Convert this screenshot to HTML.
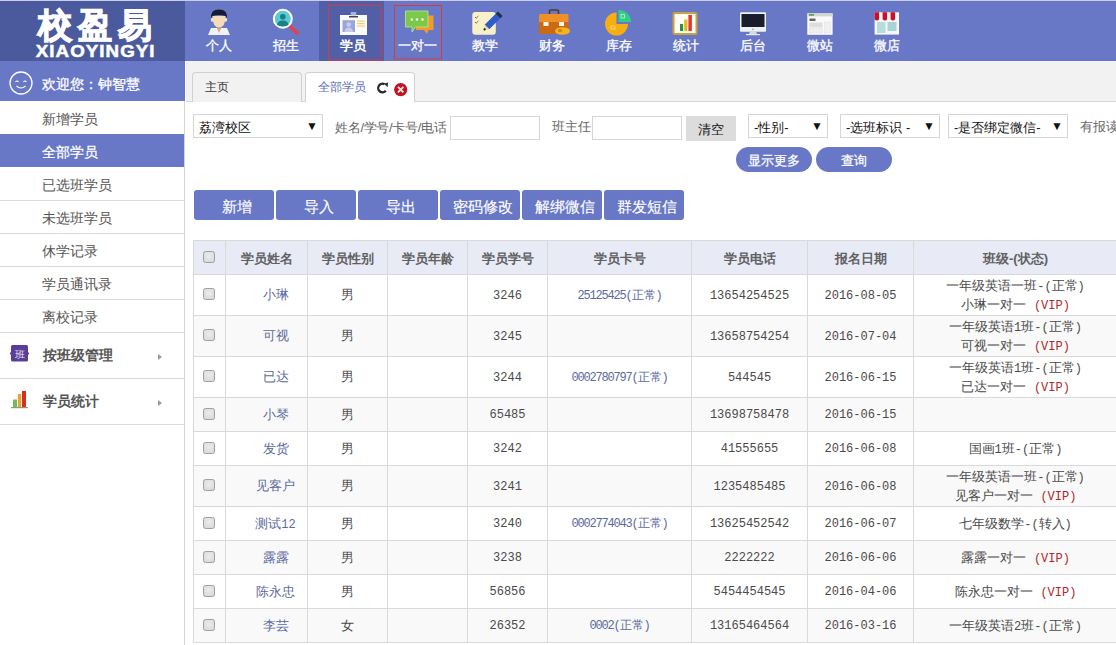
<!DOCTYPE html>
<html><head><meta charset="utf-8">
<style>
*{box-sizing:border-box;margin:0;padding:0}
html,body{width:1116px;height:645px;overflow:hidden;background:#fff;font-family:"Liberation Sans",sans-serif;position:relative}
.a{position:absolute}
#topline{left:0;top:0;width:1116px;height:1px;background:#c9cdef}
#logo{left:0;top:1px;width:185px;height:60px;background:#4b5a9c}
#nav{left:185px;top:1px;width:931px;height:60px;background:#6978c6}
#navact{left:319px;top:1px;width:65px;height:60px;background:#505fa6}
.ni{position:absolute;top:1px;width:66px;height:60px;text-align:center;color:#fff;font-size:13px}
.ni .t{position:absolute;left:0;width:66px;top:36px;line-height:17px}
.ni svg{position:absolute;left:17px;top:9px}
.rr{position:absolute;border:1px solid #d0343a}
#side{left:0;top:61px;width:185px;height:584px;background:#fff;border-right:1px solid #d4d4d4}
#welcome{left:0;top:61px;width:185px;height:40px;background:#6978c6;color:#fff;font-size:14px}
.si{position:absolute;left:0;width:184px;height:33px;font-size:14px;color:#555;line-height:33px;padding-left:42px;padding-top:2px}
.hl{position:absolute;left:0;width:184px;height:1px;background:#d9d9d9}
.si.sel{background:#6978c6;color:#fff;border-bottom:none;-webkit-text-stroke:0.25px #fff}
.sg{position:absolute;left:0;width:184px;height:46px;font-size:14px;color:#555;font-weight:bold;line-height:46px;padding-left:43px}
#tabbar{left:186px;top:61px;width:930px;height:41px;background:#f2f2f2;border-bottom:1px solid #d6d6d6}
.tab{position:absolute;top:72px;height:30px;border:1px solid #d0d0d0;border-bottom:none;border-radius:4px 4px 0 0;font-size:13px}
.sel2{position:absolute;height:24px;border:1px solid #d6d6d6;background:#fff;font-size:13px;color:#111;line-height:26px;padding-left:5px;white-space:nowrap}
.sel2 .ar{position:absolute;right:4px;top:-2px;font-size:12px}
.lbl{position:absolute;font-size:13px;color:#666;line-height:16px}
.inp{position:absolute;height:24px;border:1px solid #d6d6d6;background:#fff}
.btn{position:absolute;top:190px;width:80px;height:30px;background:#6978c6;border-radius:3px;color:#fff;font-size:14.5px;text-align:center;line-height:34px;padding-left:5px;-webkit-text-stroke:0.15px #fff}
.pill{position:absolute;top:147px;width:76px;height:25px;background:#6978c6;border-radius:13px;color:#fff;font-size:13px;text-align:center;line-height:27px;-webkit-text-stroke:0.25px #fff}
table{position:absolute;left:193px;top:240px;border-collapse:collapse;table-layout:fixed;width:924px}
td,th{border:1px solid #d9d9d9;text-align:center;vertical-align:middle;padding:0}
th{height:34px;background:#e8eaf6;font-size:13px;color:#606060;font-weight:bold;padding-top:2px}
td{font-size:13px;color:#4a4a4a;font-family:"Liberation Mono",monospace}
tr.e td{background:#f9f9f9}
.cb{display:inline-block;position:relative;top:-1px;left:-1px;width:12px;height:12px;border:1px solid #a0a0a0;border-radius:2.5px;background:radial-gradient(circle at 50% 40%,#ececec,#d6d6d6);vertical-align:middle}
.nm{color:#5b6aa0;padding-left:18px!important}
.cd{color:#5b6aa0;font-size:12px}
.vip{color:#b0262a}
.n{font-size:12px}
.nt{position:absolute;top:38px;width:80px;text-align:center;color:#fff;font-size:13px;line-height:16px;-webkit-text-stroke:0.3px #fff}
#logocn{left:0px;top:5px;width:190px;text-align:center;color:#fff;font-size:34px;font-weight:bold;letter-spacing:6px;line-height:40px;padding-left:6px;white-space:nowrap;-webkit-text-stroke:1.2px #fff}
#logoen{left:0px;top:42px;width:190px;text-align:center;color:#fff;font-size:16px;font-weight:bold;letter-spacing:0.9px;line-height:20px;padding-left:0.9px;white-space:nowrap;-webkit-text-stroke:0.5px #fff;transform:scaleX(1.17);transform-origin:94px 0}
.car{position:absolute;left:158px;top:22px;width:0;height:0;border-left:4px solid #999;border-top:3.5px solid transparent;border-bottom:3.5px solid transparent}
.cl{line-height:19px;padding-top:2px!important}
.cl span{line-height:0}
.cn{letter-spacing:-1.2px}
</style></head><body>
<div class="a" id="topline"></div>
<div class="a" id="logo"></div>
<div class="a" id="nav"></div>
<div class="a" id="navact"></div>
<div class="a" id="logocn">校盈易</div><div class="a" id="logoen">XIAOYINGYI</div>
<svg class="a" style="left:0;top:0" width="1116" height="61" viewBox="0 0 1116 61">
<!-- logo -->
<!-- person -->
<g>
<path d="M208 35 L211 28 L227 28 L230 35 Z" fill="#eef2f6"/>
<path d="M216.5 27.5 L219 33 L221.5 27.5 Z" fill="#d8aa84"/>
<ellipse cx="212.2" cy="19.8" rx="1.3" ry="2" fill="#f0e6f0"/>
<ellipse cx="225.8" cy="19.8" rx="1.3" ry="2" fill="#f0e6f0"/>
<path d="M212.5 16 Q212.5 27.5 219 27.5 Q225.5 27.5 225.5 16 Z" fill="#f5dcb8"/>
<path d="M211.3 18.5 Q210 9.5 219 9.5 Q228 9.5 226.7 18.5 L225.6 16 Q219 14 212.4 16 Z" fill="#161c30"/>
</g>
<!-- magnifier -->
<g>
<line x1="289.5" y1="26" x2="297" y2="33" stroke="#e8404a" stroke-width="3.5" stroke-linecap="round"/>
<circle cx="282.8" cy="18.8" r="9" fill="#5ccad0" stroke="#fff" stroke-width="2"/>
<circle cx="282.8" cy="16.8" r="2.8" fill="#178089"/>
<path d="M277 25 Q277.5 20.5 282.8 20.5 Q288 20.5 288.5 25 Q283 27.5 277 25Z" fill="#178089"/>
</g>
<!-- id card -->
<g>
<rect x="340" y="15" width="27" height="20" fill="#fbfbfd"/>
<rect x="350.8" y="12" width="5.4" height="3.5" fill="#aab4d6"/>
<rect x="349" y="16" width="9" height="1.5" fill="#444"/>
<rect x="342.5" y="20.2" width="12.5" height="11.8" fill="#9aa6d8"/>
<circle cx="348.7" cy="24.5" r="2.3" fill="#c5cdef"/>
<path d="M344.5 32 Q345 27.5 348.7 27.5 Q352.5 27.5 353 32Z" fill="#c5cdef"/>
<rect x="357" y="20.5" width="8" height="1.2" fill="#f2d36a"/>
<rect x="357" y="23" width="8" height="1.2" fill="#f2d36a"/>
<rect x="357" y="25.5" width="8" height="1.2" fill="#f2d36a"/>
</g>
<!-- chat -->
<g>
<path d="M416 15.5 H433.5 V30 H428.5 L427 34 L424 30 H416 Z" fill="#f59a28"/>
<path d="M405.5 11 H428 V27 H415.5 L412 32 V27 H405.5 Z" fill="#7cc848" stroke="#b9eaa0" stroke-width="0.8"/>
<circle cx="411.8" cy="19.5" r="1.3" fill="#f4ffe8"/>
<circle cx="417" cy="19.5" r="1.3" fill="#f4ffe8"/>
<circle cx="422.5" cy="19.5" r="1.3" fill="#f4ffe8"/>
</g>
<!-- notepad -->
<g>
<rect x="472.3" y="12" width="23.5" height="22.8" rx="3" fill="#f8f1c8"/>
<path d="M475 17 l1.2 1.2 l2.2 -2.2 M475 22 l1.2 1.2 l2.2 -2.2" stroke="#4a5a7a" stroke-width="0.9" fill="none"/>
<path d="M484.7 24.7 L495.7 13.7 L500.3 18.3 L489.3 29.3 Z" fill="#2f5bd0"/>
<path d="M495.7 13.7 L498 11.4 L502.6 16 L500.3 18.3 Z" fill="#233040"/>
<path d="M484.7 24.7 L489.3 29.3 L484 30 Z" fill="#e8d8a8"/>
<circle cx="484.6" cy="29.4" r="1.1" fill="#111"/>
</g>
<!-- briefcase -->
<g>
<path d="M549.5 14 V11 Q549.5 10 551 10 H557 Q558.5 10 558.5 11 V14" stroke="#5a3a1a" stroke-width="1.6" fill="none"/>
<rect x="539" y="14" width="29.5" height="9" rx="1.5" fill="#ed9026"/>
<rect x="539" y="22" width="29.5" height="12" rx="1" fill="#cc6a14"/>
<rect x="543.5" y="22" width="5" height="4" fill="#fff6e8"/>
<rect x="559" y="22" width="5" height="4" fill="#fff6e8"/>
<ellipse cx="562.5" cy="31" rx="7.5" ry="3.8" fill="#f6b21e"/>
<ellipse cx="560" cy="30.5" rx="2.2" ry="1.7" fill="#c98a10"/>
</g>
<!-- pie -->
<g>
<path d="M616.5 12.5 V24 H628 A11.5 11.5 0 1 1 616.5 12.5 Z" fill="#f6ae10"/>
<path d="M618.5 10 V22 H631 A12.5 12 0 0 0 618.5 10 Z" fill="#2fcf86"/>
<rect x="621" y="14.5" width="3.5" height="3.5" fill="none" stroke="#b8f5d8" stroke-width="0.8"/>
<rect x="611" y="26" width="4" height="3" fill="none" stroke="#ffe08a" stroke-width="0.8"/>
</g>
<!-- chart frame -->
<g>
<rect x="673.5" y="13" width="23" height="21" rx="1.5" fill="#fffdf6" stroke="#c9a23e" stroke-width="2"/>
<rect x="680" y="24" width="3" height="7" fill="#1f9a3a"/>
<rect x="684.2" y="19.5" width="3" height="11.5" fill="#f0b418"/>
<rect x="688.4" y="15" width="3.5" height="16" fill="#e03a30"/>
</g>
<!-- monitor -->
<g>
<rect x="740" y="12.3" width="26" height="19.5" rx="1" fill="#eef0f4"/>
<rect x="741.5" y="14" width="23" height="13" fill="#1a1e2c"/>
<path d="M750 31.5 L749 34 H757 L756 31.5 Z" fill="#d8dae2"/>
<rect x="746" y="34" width="14" height="1.2" fill="#e8eaf0"/>
<circle cx="753" cy="29.3" r="0.8" fill="#888"/>
</g>
<!-- window -->
<g>
<rect x="807.3" y="13.4" width="25.3" height="21.4" fill="#fafafa"/>
<rect x="807.3" y="13.4" width="25.3" height="3" fill="#d4d8d0"/>
<rect x="809" y="14.2" width="5" height="1.4" fill="#4a8a3a"/>
<rect x="809.5" y="18.5" width="6" height="2.5" fill="#666"/>
<rect x="809.5" y="22.5" width="13" height="5" fill="#dddddd"/>
<rect x="809.5" y="28.5" width="13" height="4.5" fill="#eeeeee" stroke="#dddddd" stroke-width="0.5"/>
<rect x="824.5" y="22" width="6" height="11" fill="#f0f0f0" stroke="#e0e0e0" stroke-width="0.5"/>
</g>
<!-- store -->
<g>
<rect x="874.6" y="12.3" width="24.4" height="22.3" fill="#f4f6f8"/>
<rect x="877" y="22" width="8.5" height="11" fill="#b8dcd8"/>
<rect x="887.5" y="22" width="9" height="9" fill="#a8d4d2"/>
<path d="M874.6 12.3 h4.5 v7 q-2.25 2.5 -4.5 0Z" fill="#c8102a"/>
<path d="M882.6 12.3 h4.5 v7 q-2.25 2.5 -4.5 0Z" fill="#c8102a"/>
<path d="M890.6 12.3 h4.5 v7 q-2.25 2.5 -4.5 0Z" fill="#c8102a"/>
</g>
<rect x="328.5" y="5.5" width="52.5" height="54.5" fill="none" stroke="#d43a44" stroke-width="1"/>
<rect x="394.5" y="5.5" width="47" height="53.5" fill="none" stroke="#d43a44" stroke-width="1"/>
</svg>
<div class="nt" style="left:179.3px">个人</div>
<div class="nt" style="left:246.0px">招生</div>
<div class="nt" style="left:312.6px;font-weight:bold;-webkit-text-stroke:0">学员</div>
<div class="nt" style="left:377.9px">一对一</div>
<div class="nt" style="left:444.8px">教学</div>
<div class="nt" style="left:511.8px">财务</div>
<div class="nt" style="left:579.0px">库存</div>
<div class="nt" style="left:645.8px">统计</div>
<div class="nt" style="left:713.3px">后台</div>
<div class="nt" style="left:780.0px">微站</div>
<div class="nt" style="left:847.1px">微店</div>


<div class="a" id="side"></div>
<div class="a" id="welcome"></div>
<div class="a" id="tabbar"></div>
<svg class="a" style="left:8px;top:70px" width="26" height="26" viewBox="0 0 26 26">
<circle cx="13" cy="13" r="11" fill="none" stroke="#fff" stroke-width="1.3"/>
<path d="M7.5 12 q1.5 -2 3 0 M15.5 12 q1.5 -2 3 0" stroke="#fff" stroke-width="1.1" fill="none"/>
<path d="M8.5 16 q4.5 4 9 0" stroke="#fff" stroke-width="1.1" fill="none"/>
</svg>
<div class="a" style="left:42px;top:75px;font-size:14px;color:#fff;line-height:18px;-webkit-text-stroke:0.3px #fff">欢迎您：钟智慧</div>
<div class="si" style="top:101px">新增学员</div>
<div class="si sel" style="top:134px">全部学员</div>
<div class="si" style="top:167px">已选班学员</div>
<div class="si" style="top:200px">未选班学员</div>
<div class="si" style="top:233px">休学记录</div>
<div class="si" style="top:266px">学员通讯录</div>
<div class="si" style="top:299px">离校记录</div>
<div class="hl" style="top:200px"></div><div class="hl" style="top:233px"></div><div class="hl" style="top:266px"></div><div class="hl" style="top:299px"></div><div class="hl" style="top:332px"></div><div class="hl" style="top:378px"></div><div class="hl" style="top:424px"></div>
<div class="sg" style="top:332px">按班级管理<span class="car"></span></div>
<div class="sg" style="top:378px">学员统计<span class="car"></span></div>
<svg class="a" style="left:9px;top:343px" width="22" height="22" viewBox="0 0 22 22">
<rect x="2" y="2" width="17" height="16.5" rx="1.5" fill="#5a3d96"/>
<rect x="1" y="9.5" width="1.5" height="2" fill="#5a3d96"/><rect x="18.5" y="9.5" width="1.5" height="2" fill="#5a3d96"/>
<text x="10.5" y="14.5" font-size="9.5" fill="#efe8fb" text-anchor="middle" font-family="Liberation Serif">班</text>
</svg>
<svg class="a" style="left:9px;top:388px" width="22" height="22" viewBox="0 0 22 22">
<rect x="4" y="11.5" width="4" height="7.5" fill="#6cbf5a"/>
<rect x="8.8" y="6" width="3.2" height="13" fill="#f0a030"/>
<rect x="13" y="3" width="4" height="16" fill="#d9301e"/>
<rect x="2" y="19" width="17" height="1.2" fill="#8a9a8a"/>
</svg>


<div class="tab" style="left:192px;width:110px;background:#f2f2f2"><span class="a" style="left:12px;top:6px;font-size:12px;color:#333">主页</span></div>
<div class="tab" style="left:305px;width:110px;height:30px;background:#fff"><span class="a" style="left:12px;top:6px;font-size:12px;color:#5a6ab8">全部学员</span></div>
<svg class="a" style="left:374px;top:80px" width="36" height="18" viewBox="0 0 36 18">
<path d="M10.65 4.3 A4.3 4.3 0 1 0 11.8 10.8" fill="none" stroke="#2a2a2a" stroke-width="2.3"/>
<path d="M9.8 3.6 L14.2 2.6 L13.6 7.2 Z" fill="#2a3a30"/>
<circle cx="26.7" cy="9.6" r="6.6" fill="#c5101f"/>
<path d="M24 6.9 L29.4 12.3 M29.4 6.9 L24 12.3" stroke="#fbeaea" stroke-width="1.9"/>
</svg>
<div class="sel2" style="left:193px;top:114px;width:130px">荔湾校区<span class="ar">▼</span></div>
<div class="lbl" style="left:335px;top:120px;letter-spacing:-0.3px">姓名/学号/卡号/电话</div>
<div class="inp" style="left:450px;top:116px;width:90px"></div>
<div class="lbl" style="left:552px;top:119px">班主任</div>
<div class="inp" style="left:592px;top:116px;width:90px"></div>
<div class="a" style="left:686px;top:116px;width:50px;height:25px;background:#dcdcdc;font-size:13px;color:#111;text-align:center;line-height:27px">清空</div>
<div class="sel2" style="left:748px;top:114px;width:80px">-性别-<span class="ar">▼</span></div>
<div class="sel2" style="left:840px;top:114px;width:100px">-选班标识 -<span class="ar">▼</span></div>
<div class="sel2" style="left:948px;top:114px;width:120px">-是否绑定微信-<span class="ar">▼</span></div>
<div class="lbl" style="left:1080px;top:119px;white-space:nowrap">有报读</div>
<div class="pill" style="left:736px">显示更多</div>
<div class="pill" style="left:816px">查询</div>
<div class="btn" style="left:194px">新增</div>
<div class="btn" style="left:276px">导入</div>
<div class="btn" style="left:358px">导出</div>
<div class="btn" style="left:440px">密码修改</div>
<div class="btn" style="left:522px">解绑微信</div>
<div class="btn" style="left:604px">群发短信</div>
<table><colgroup><col style="width:32px"><col style="width:82px"><col style="width:80px"><col style="width:80px"><col style="width:80px"><col style="width:144px"><col style="width:116px"><col style="width:106px"><col style="width:204px"></colgroup>
<tr><th style="padding:0"><span class="cb" style="top:-2px"></span></th><th>学员姓名</th><th>学员性别</th><th>学员年龄</th><th>学员学号</th><th>学员卡号</th><th>学员电话</th><th>报名日期</th><th>班级-(状态)</th></tr>
<tr style="height:41px"><td><span class="cb"></span></td><td class="nm">小琳</td><td>男</td><td></td><td><span class="n">3246</span></td><td><span class="cd"><span class="cn">25125425(</span>正常<span class="cn">)</span></span></td><td><span class="n">13654254525</span></td><td><span class="n">2016-08-05</span></td><td class="cl">一年级英语一班<span class="n">-(</span>正常<span class="n">)</span><br>小琳一对一 <span class="vip"><span class="n">(VIP)</span></span></td></tr>
<tr class="e" style="height:41px"><td><span class="cb"></span></td><td class="nm">可视</td><td>男</td><td></td><td><span class="n">3245</span></td><td></td><td><span class="n">13658754254</span></td><td><span class="n">2016-07-04</span></td><td class="cl">一年级英语<span class="n">1</span>班<span class="n">-(</span>正常<span class="n">)</span><br>可视一对一 <span class="vip"><span class="n">(VIP)</span></span></td></tr>
<tr style="height:41px"><td><span class="cb"></span></td><td class="nm">已达</td><td>男</td><td></td><td><span class="n">3244</span></td><td><span class="cd"><span class="cn">0002780797(</span>正常<span class="cn">)</span></span></td><td><span class="n">544545</span></td><td><span class="n">2016-06-15</span></td><td class="cl">一年级英语<span class="n">1</span>班<span class="n">-(</span>正常<span class="n">)</span><br>已达一对一 <span class="vip"><span class="n">(VIP)</span></span></td></tr>
<tr class="e" style="height:34px"><td><span class="cb"></span></td><td class="nm">小琴</td><td>男</td><td></td><td><span class="n">65485</span></td><td></td><td><span class="n">13698758478</span></td><td><span class="n">2016-06-15</span></td><td class="cl"></td></tr>
<tr style="height:34px"><td><span class="cb"></span></td><td class="nm">发货</td><td>男</td><td></td><td><span class="n">3242</span></td><td></td><td><span class="n">41555655</span></td><td><span class="n">2016-06-08</span></td><td class="cl">国画<span class="n">1</span>班<span class="n">-(</span>正常<span class="n">)</span></td></tr>
<tr class="e" style="height:41px"><td><span class="cb"></span></td><td class="nm">见客户</td><td>男</td><td></td><td><span class="n">3241</span></td><td></td><td><span class="n">1235485485</span></td><td><span class="n">2016-06-08</span></td><td class="cl">一年级英语一班<span class="n">-(</span>正常<span class="n">)</span><br>见客户一对一 <span class="vip"><span class="n">(VIP)</span></span></td></tr>
<tr style="height:34px"><td><span class="cb"></span></td><td class="nm">测试<span class="n">12</span></td><td>男</td><td></td><td><span class="n">3240</span></td><td><span class="cd"><span class="cn">0002774043(</span>正常<span class="cn">)</span></span></td><td><span class="n">13625452542</span></td><td><span class="n">2016-06-07</span></td><td class="cl">七年级数学<span class="n">-(</span>转入<span class="n">)</span></td></tr>
<tr class="e" style="height:34px"><td><span class="cb"></span></td><td class="nm">露露</td><td>男</td><td></td><td><span class="n">3238</span></td><td></td><td><span class="n">2222222</span></td><td><span class="n">2016-06-06</span></td><td class="cl">露露一对一 <span class="vip"><span class="n">(VIP)</span></span></td></tr>
<tr style="height:34px"><td><span class="cb"></span></td><td class="nm">陈永忠</td><td>男</td><td></td><td><span class="n">56856</span></td><td></td><td><span class="n">5454454545</span></td><td><span class="n">2016-04-06</span></td><td class="cl">陈永忠一对一 <span class="vip"><span class="n">(VIP)</span></span></td></tr>
<tr class="e" style="height:34px"><td><span class="cb"></span></td><td class="nm">李芸</td><td>女</td><td></td><td><span class="n">26352</span></td><td><span class="cd"><span class="cn">0002(</span>正常<span class="cn">)</span></span></td><td><span class="n">13165464564</span></td><td><span class="n">2016-03-16</span></td><td class="cl">一年级英语<span class="n">2</span>班<span class="n">-(</span>正常<span class="n">)</span></td></tr>
</table>
</body></html>
